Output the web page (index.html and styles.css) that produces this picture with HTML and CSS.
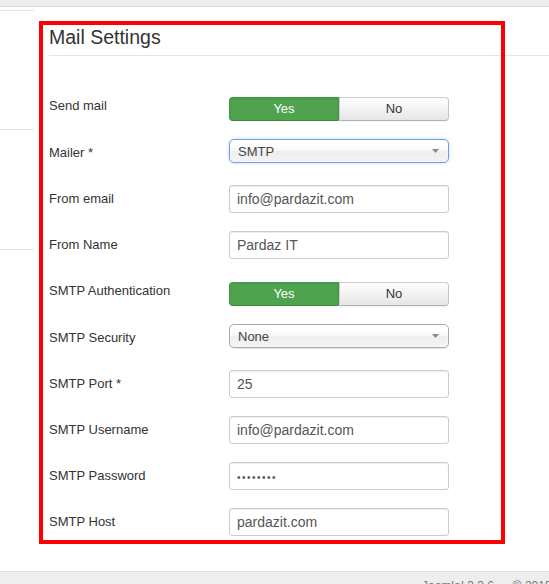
FILE: index.html
```html
<!DOCTYPE html>
<html lang="en">
<head>
<meta charset="utf-8">
<title>Mail Settings</title>
<link rel="stylesheet" href="styles.css">
</head>
<body>
<div class="topbar"></div>
<div class="page">
  <aside class="sidebar">
    <div class="side-item side-a"></div>
    <div class="side-item side-b"></div>
    <div class="side-item side-c"></div>
  </aside>
  <main class="content">
    <div class="legend">Mail Settings</div>
    <div class="form">
      <div class="row row-toggle">
        <div class="label">Send mail</div>
        <div class="controls">
          <div class="toggle"><span class="btn btn-yes">Yes</span><span class="btn btn-no">No</span></div>
        </div>
      </div>
      <div class="row row-select">
        <div class="label">Mailer *</div>
        <div class="controls">
          <div class="select select-active"><span>SMTP</span><svg class="caret" width="7" height="4" viewBox="0 0 7 4"><polygon points="0,0 7,0 3.5,4" fill="#888"/></svg></div>
        </div>
      </div>
      <div class="row">
        <div class="label">From email</div>
        <div class="controls"><div class="field">info@pardazit.com</div></div>
      </div>
      <div class="row">
        <div class="label">From Name</div>
        <div class="controls"><div class="field">Pardaz IT</div></div>
      </div>
      <div class="row row-toggle">
        <div class="label">SMTP Authentication</div>
        <div class="controls">
          <div class="toggle"><span class="btn btn-yes">Yes</span><span class="btn btn-no">No</span></div>
        </div>
      </div>
      <div class="row row-select">
        <div class="label">SMTP Security</div>
        <div class="controls">
          <div class="select"><span>None</span><svg class="caret" width="7" height="4" viewBox="0 0 7 4"><polygon points="0,0 7,0 3.5,4" fill="#888"/></svg></div>
        </div>
      </div>
      <div class="row">
        <div class="label">SMTP Port *</div>
        <div class="controls"><div class="field">25</div></div>
      </div>
      <div class="row">
        <div class="label">SMTP Username</div>
        <div class="controls"><div class="field">info@pardazit.com</div></div>
      </div>
      <div class="row">
        <div class="label">SMTP Password</div>
        <div class="controls"><div class="field"><span class="dots">••••••••</span></div></div>
      </div>
      <div class="row">
        <div class="label">SMTP Host</div>
        <div class="controls"><div class="field">pardazit.com</div></div>
      </div>
    </div>
  </main>
</div>
<footer class="footer"><span class="copyright">Joomla! 3.3.6 — © 2015 Pardaz IT</span></footer>
<div class="highlight"></div>
</body>
</html>
```
FILE: styles.css
```css
html {
  overflow: hidden;
}
body {
  margin: 0;
  font-family: "Liberation Sans", Arial, sans-serif;
  color: #333;
  background: #fff;
}
.topbar {
  height: 6px;
  background: #ececec;
  border-bottom: 1px solid #dadada;
}
.page {
  display: flex;
}
.sidebar {
  width: 34px;
  flex: none;
  padding-top: 3px;
}
.side-item {
  box-sizing: border-box;
  border-top: 1px solid #e3e3e3;
}
.side-a { height: 119px; }
.side-b { height: 120px; }
.side-c { height: 1px; }
.content {
  flex: 1;
  margin-left: 15px;
  padding-top: 18px;
  padding-bottom: 17px;
}
.legend {
  font-size: 19.5px;
  line-height: 24px;
  padding-bottom: 6px;
  border-bottom: 1px solid #e5e5e5;
  color: #333;
}
.form {
  margin-top: 36px;
}
.row {
  display: flex;
  margin-bottom: 18px;
}
.label {
  width: 180px;
  flex: none;
  padding-top: 5px;
  font-size: 13px;
  line-height: 18px;
  color: #333;
}
.controls {
  width: 220px;
  height: 28px;
}
.row-toggle .controls {
  padding-top: 5px;
  height: 24px;
}
.toggle {
  display: flex;
  width: 220px;
  height: 24px;
}
.btn {
  flex: 1;
  box-sizing: border-box;
  text-align: center;
  font-size: 13px;
  line-height: 22px;
  border: 1px solid;
}
.btn-yes {
  background: #4fa34f;
  color: #fff;
  border-color: #449944 #449944 #3b873b #449944;
  border-radius: 4px 0 0 4px;
  box-shadow: inset 0 1px 2px rgba(0, 0, 0, 0.08);
}
.btn-no {
  background: linear-gradient(#ffffff, #e6e6e6);
  color: #333;
  border-color: #cccccc #c5c5c5 #b3b3b3 #cccccc;
  border-radius: 0 4px 4px 0;
  box-shadow: 0 1px 1px rgba(0, 0, 0, 0.05);
}
.select {
  box-sizing: border-box;
  height: 24px;
  width: 220px;
  display: flex;
  align-items: center;
  justify-content: space-between;
  padding: 0 9px 0 8px;
  border: 1px solid #aaa;
  border-radius: 5px;
  background: linear-gradient(#ffffff 20%, #f6f6f6 50%, #eeeeee 52%, #f4f4f4 100%);
  box-shadow: inset 0 0 3px #fff, 0 1px 1px rgba(0, 0, 0, 0.1);
  font-size: 13px;
  color: #444;
}
.select-active {
  border-color: #6f9fe8;
  box-shadow: inset 0 0 3px #fff, 0 0 3px rgba(88, 151, 251, 0.45);
}
.caret {
  display: block;
}
.field {
  box-sizing: border-box;
  height: 28px;
  width: 220px;
  padding: 0 7px;
  border: 1px solid #ccc;
  border-radius: 3px;
  background: #fff;
  box-shadow: inset 0 1px 1px rgba(0, 0, 0, 0.075);
  font-size: 14px;
  line-height: 26px;
  color: #555;
}
.dots {
  font-size: 10px;
  letter-spacing: 1.5px;
  color: #555;
}
.footer {
  border-top: 1px solid #dddddd;
  background: #eeeeee;
  padding: 5px 0 0 422px;
  font-size: 12px;
  line-height: 18px;
  color: #777;
  white-space: nowrap;
}
.highlight {
  position: absolute;
  left: 39px;
  top: 21px;
  width: 458px;
  height: 515px;
  border: 4px solid #ff0000;
  pointer-events: none;
}
```
